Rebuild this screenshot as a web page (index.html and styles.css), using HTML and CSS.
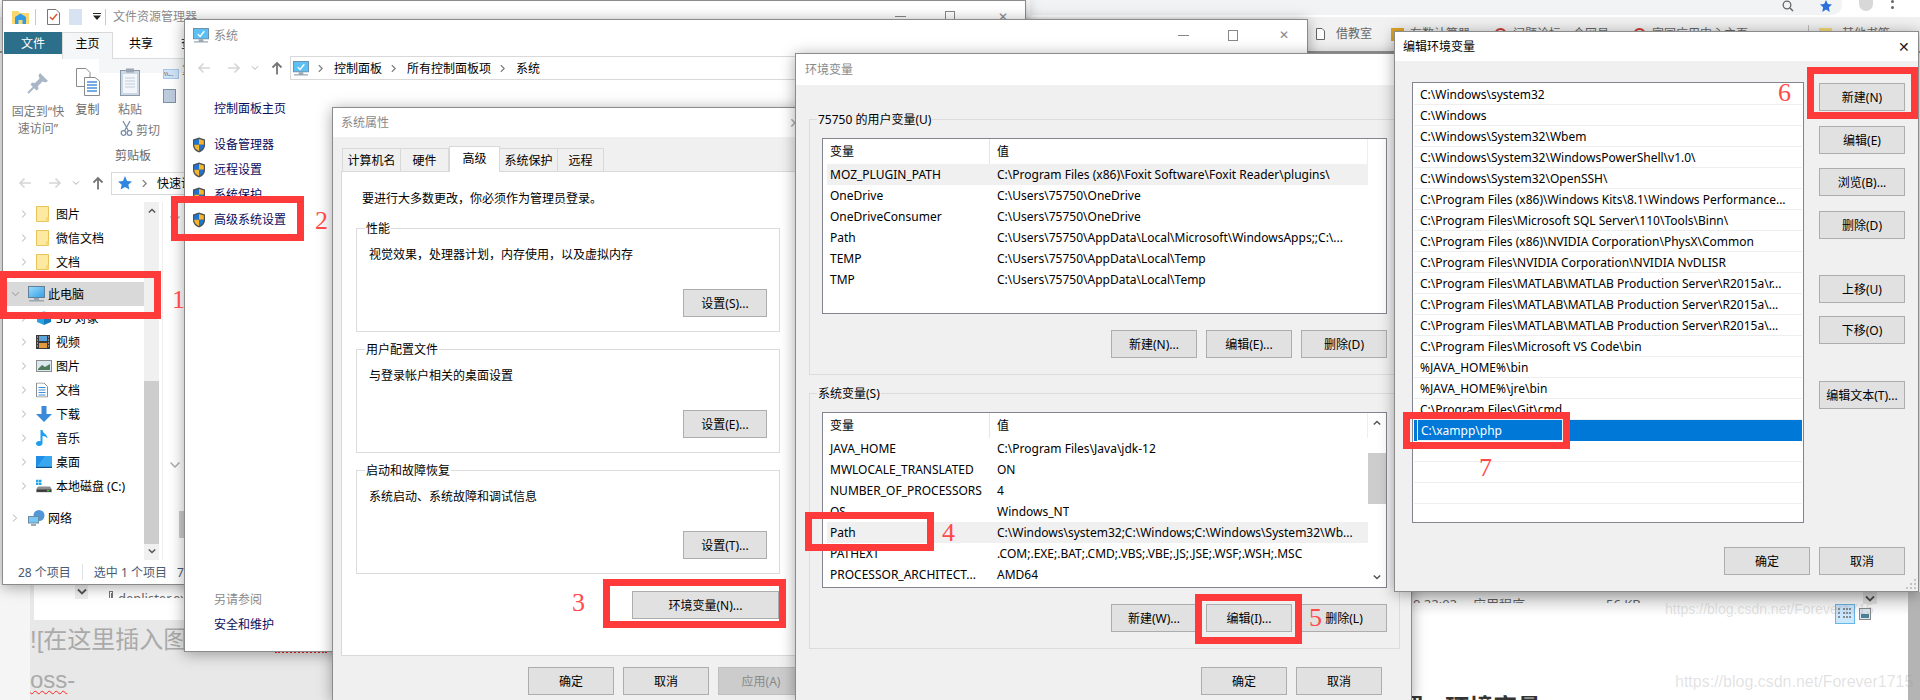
FILE: index.html
```html
<!DOCTYPE html>
<html lang="zh-CN">
<head>
<meta charset="utf-8">
<title>环境变量</title>
<link rel="stylesheet" href="styles.css">
</head>
<body>
<svg class="sprite" width="0" height="0">
  <symbol id="shield" viewBox="0 0 14 16">
    <path d="M7 0.5 13 2.5V8C13 12 10 14.5 7 15.5 4 14.5 1 12 1 8V2.5Z" fill="#4b5157"/>
    <path d="M7 2 2.2 3.4V7.8H7Z" fill="#1e74d2"/>
    <path d="M7 2 11.8 3.4V7.8H7Z" fill="#f7b52a"/>
    <path d="M2.2 7.8H7V14C4.4 13 2.3 11 2.2 7.8Z" fill="#f7b52a"/>
    <path d="M11.8 7.8H7V14C9.6 13 11.7 11 11.8 7.8Z" fill="#1e74d2"/>
  </symbol>
  <symbol id="monitor" viewBox="0 0 17 16">
    <rect x="0.5" y="0.5" width="16" height="11" fill="#5cc0f5" stroke="#6a8ea8"/>
    <path d="M5 6.5 7.5 9 12 3.5" fill="none" stroke="#fff" stroke-width="1.4"/>
    <path d="M6 12H11V14H6ZM1 14H16V15.5H1Z" fill="#9aa7b2"/>
  </symbol>
  <symbol id="monitor-plain" viewBox="0 0 17 16">
    <linearGradient id="screen" x1="0" y1="0" x2="1" y2="1"><stop offset="0" stop-color="#9fdcfb"/><stop offset="1" stop-color="#2f9fe6"/></linearGradient>
    <rect x="0.5" y="0.5" width="16" height="11" fill="url(#screen)" stroke="#5f7f99"/>
    <path d="M6 12H11V14H6ZM1 14H16V15.5H1Z" fill="#9aa7b2"/>
  </symbol>
  <symbol id="folder" viewBox="0 0 13 16">
    <path d="M0.5 0.5H12.5V15.5H0.5Z" fill="#fde9a0" stroke="#e8c35a"/>
    <path d="M10 11H12.5V15.5H10Z" fill="#f6d877"/>
  </symbol>
  <symbol id="chev-r" viewBox="0 0 8 12"><path d="M1.5 1.5 6 6 1.5 10.5" fill="none" stroke="#c4c4c4" stroke-width="1.4"/></symbol>
  <symbol id="chev-d" viewBox="0 0 12 8"><path d="M1.5 1.5 6 6 10.5 1.5" fill="none" stroke="#a8a8a8" stroke-width="1.4"/></symbol>
  <symbol id="arr-u" viewBox="0 0 10 7"><path d="M1 5.5 5 1.5 9 5.5" fill="none" stroke="#555" stroke-width="1.8"/></symbol>
  <symbol id="arr-d" viewBox="0 0 10 7"><path d="M1 1.5 5 5.5 9 1.5" fill="none" stroke="#555" stroke-width="1.8"/></symbol>
  <symbol id="back" viewBox="0 0 14 12"><path d="M13 6H2M6.5 1.5 2 6 6.5 10.5" fill="none" stroke="#d5d5d5" stroke-width="1.6"/></symbol>
  <symbol id="fwd" viewBox="0 0 14 12"><path d="M1 6H12M7.5 1.5 12 6 7.5 10.5" fill="none" stroke="#d5d5d5" stroke-width="1.6"/></symbol>
  <symbol id="up" viewBox="0 0 12 14"><path d="M6 13.5V2M1.5 6.5 6 2 10.5 6.5" fill="none" stroke="#757575" stroke-width="1.8"/></symbol>
  <symbol id="crumb" viewBox="0 0 6 10"><path d="M1 1 5 5 1 9" fill="none" stroke="#7a7a7a" stroke-width="1.5"/></symbol>
</svg>

<div class="browser-bar">
  <div class="omnibox">
    <svg class="omni-lens" width="12" height="12" viewBox="0 0 12 12"><circle cx="5" cy="5" r="3.8" fill="none" stroke="#666" stroke-width="1.3"/><path d="M8 8 11 11" stroke="#666" stroke-width="1.5"/></svg>
    <svg class="omni-star" width="12" height="12" viewBox="0 0 12 12"><path d="M6 0 7.8 4 12 4.5 8.9 7.3 9.7 12 6 9.6 2.3 12 3.1 7.3 0 4.5 4.2 4Z" fill="#2a6fdb"/></svg>
  </div>
  <div class="avatar"></div>
  <div class="menu-dots"><i></i><i></i></div>
</div>
<div class="bookmarks">
  <svg class="bm-doc" width="9" height="12" viewBox="0 0 9 12"><path d="M0.5 0.5H6L8.5 3V11.5H0.5Z" fill="#fff" stroke="#666"/></svg>
  <span class="bm-a">借教室</span>
  <i class="bm-ic bm-yellow"></i><span class="bm-b">有数计算器</span>
  <i class="bm-ic bm-red"></i><span class="bm-c">问题论坛一个网易</span>
  <i class="bm-ic bm-red"></i><span class="bm-d">家园应用中心主页</span>
  <i class="bm-sep"></i>
  <i class="bm-ic bm-folder"></i><span class="bm-e">其他书签</span>
</div>

<div class="editor-bg">
  <div class="behind-panel">
    <span class="behind-arrow"><svg width="10" height="7"><use href="#arr-d"/></svg></span>
    <span class="behind-file"><i class="file-ic"></i>deplister.exe</span>
  </div>
  <p class="md-line">![在这里插入图</p>
  <p class="md-line md-oss"><span class="wavy">oss</span>-</p>
  <i class="red-dots"></i>
</div>

<div class="right-bg">
  <div class="behind-row"><span class="c-date">0 22:02</span><span class="c-type">应用程序</span><span class="c-size">56 KB</span></div>
  <span class="behind-arrow2"><svg width="10" height="7"><use href="#arr-d"/></svg></span>
  <div class="view-icons">
    <span class="view-a"><svg width="16" height="14" viewBox="0 0 16 14"><path d="M1 2H4M6 2H15M1 6H4M6 6H15M1 10H4M6 10H15" stroke="#6d6d6d" stroke-width="1.4" stroke-dasharray="2 1"/></svg></span>
    <span class="view-b"></span>
  </div>
  <h2 class="bg-heading">置 › 环境变量 ›</h2>
</div>
<span class="wm wm-a">https://blog.csdn.net/Forever1715</span>
<span class="wm wm-b">https://blog.csdn.net/Forever1715</span>

<!-- File Explorer -->
<section class="win explorer">
  <header class="ex-title">
    <svg class="ex-home" width="17" height="14" viewBox="0 0 17 14"><path d="M0 1H6L8 3H17V14H0Z" fill="#f9d76e"/><path d="M3 14V7L8.5 3.5 14 7V14H10.5V10H6.5V14Z" fill="#2f9be6"/></svg>
    <i class="ex-divider"></i>
    <svg class="ex-check" width="13" height="16" viewBox="0 0 13 16"><path d="M0.5 0.5H9L12.5 4V15.5H0.5Z" fill="#fff" stroke="#777"/><path d="M3 8 5.5 10.5 10 5" fill="none" stroke="#d9512c" stroke-width="1.4"/></svg>
    <i class="ex-doc"></i>
    <svg class="ex-drop" width="8" height="7" viewBox="0 0 8 7"><path d="M0 0H8V1H0ZM0 2.5H8L4 7Z" fill="#222"/></svg>
    <i class="ex-divider ex-divider-b"></i>
    <span class="ex-title-text">文件资源管理器</span>
    <span class="caption ex-caption"><span class="cap-min"></span><span class="cap-max"></span><span class="cap-x">✕</span></span>
  </header>
  <nav class="ex-tabs">
    <span class="ex-tab ex-file">文件</span>
    <span class="ex-tab ex-home-tab">主页</span>
    <span class="ex-tab ex-share">共享</span>
    <span class="ex-tab ex-view">查看</span>
  </nav>
  <div class="ribbon">
    <div class="rb-col rb-pin">
      <svg width="22" height="22" viewBox="0 0 22 22"><path d="M13 1 21 9 18.5 10.5 15.5 9.5 11 14 11.5 17 9.5 18.5 3.5 12.5 5 10.5 8 11 12.5 6.5 11.5 3.5Z" fill="#a9b6c6"/><path d="M7 15 1 21" stroke="#a9b6c6" stroke-width="2"/></svg>
      <span class="rb-text">固定到“快</span>
      <span class="rb-text">速访问”</span>
    </div>
    <div class="rb-col rb-copy">
      <svg width="24" height="28" viewBox="0 0 24 28"><path d="M0.5 0.5H10L14 4.5V18.5H0.5Z" fill="#fff" stroke="#8a8a8a"/><path d="M8.5 9.5H19L23.5 13V27.5H8.5Z" fill="#fff" stroke="#8a8a8a"/><path d="M11 14H21M11 17H21M11 20H21M11 23H21" stroke="#4a90d9" stroke-width="1.4"/></svg>
      <span class="rb-text rb-dark">复制</span>
    </div>
    <div class="rb-col rb-paste">
      <svg width="20" height="28" viewBox="0 0 20 28"><rect x="0.5" y="2.5" width="19" height="25" fill="#cdd7e4" stroke="#8b98a8"/><rect x="3" y="6" width="14" height="19" fill="#f3f6fa"/><rect x="6" y="0.5" width="8" height="4" fill="#9aa6b5"/><path d="M5 10H15M5 13H15M5 16H15M5 19H15" stroke="#c2ccd9"/></svg>
      <span class="rb-text">粘贴</span>
      <span class="rb-cut">
        <svg width="13" height="16" viewBox="0 0 13 16"><path d="M3 1 8.5 11M10 1 4.5 11" stroke="#7b8ea8" stroke-width="1.3"/><circle cx="3.5" cy="13" r="2.3" fill="none" stroke="#7b8ea8" stroke-width="1.3"/><circle cx="9.5" cy="13" r="2.3" fill="none" stroke="#7b8ea8" stroke-width="1.3"/></svg>
        剪切
      </span>
      <span class="rb-text rb-group">剪贴板</span>
    </div>
    <div class="rb-col rb-small">
      <i class="rb-s1">\\...</i>
      <i class="rb-s2"></i>
      <span class="rb-cut-text">复</span>
    </div>
  </div>
  <div class="ex-nav">
    <svg class="n-back" width="14" height="12"><use href="#back"/></svg>
    <svg class="n-fwd" width="14" height="12"><use href="#fwd"/></svg>
    <svg class="n-drop" width="8" height="6"><use href="#chev-d"/></svg>
    <svg class="n-up" width="12" height="14"><use href="#up"/></svg>
    <div class="ex-address">
      <svg width="14" height="14" viewBox="0 0 14 14"><path d="M7 0 9 5 14 5.4 10.3 8.7 11.4 13.6 7 11 2.6 13.6 3.7 8.7 0 5.4 5 5Z" fill="#2f86de"/></svg>
      <svg class="crumb-ic" width="5" height="9"><use href="#crumb"/></svg>
      <span>快速访问</span>
    </div>
  </div>
  <div class="ex-body">
    <ul class="tree">
      <li class="t-row"><svg class="t-chev" width="6" height="10"><use href="#chev-r"/></svg><svg class="t-ic" width="13" height="16"><use href="#folder"/></svg>图片</li>
      <li class="t-row"><svg class="t-chev" width="6" height="10"><use href="#chev-r"/></svg><svg class="t-ic" width="13" height="16"><use href="#folder"/></svg>微信文档</li>
      <li class="t-row"><svg class="t-chev" width="6" height="10"><use href="#chev-r"/></svg><svg class="t-ic" width="13" height="16"><use href="#folder"/></svg>文档</li>
      <li class="t-row t-root t-selected"><svg class="t-chev-d" width="9" height="6"><use href="#chev-d"/></svg><svg class="t-root-ic" width="17" height="16"><use href="#monitor-plain"/></svg>此电脑</li>
      <li class="t-row"><svg class="t-chev" width="6" height="10"><use href="#chev-r"/></svg><svg class="t-ic" width="16" height="16" viewBox="0 0 16 16"><path d="M8 1 15 4 8 7 1 4Z" fill="#8fd3f5"/><path d="M1 4 8 7V15L1 12Z" fill="#2aa2e0"/><path d="M15 4 8 7V15L15 12Z" fill="#137bbf"/></svg>3D 对象</li>
      <li class="t-row"><svg class="t-chev" width="6" height="10"><use href="#chev-r"/></svg><svg class="t-ic" width="14" height="14" viewBox="0 0 14 14"><rect width="14" height="14" fill="#3a3a3a"/><rect x="3" y="1" width="8" height="5" fill="#5ba3dc"/><rect x="3" y="8" width="8" height="5" fill="#e39a3b"/><path d="M1 2H2M1 5H2M1 8H2M1 11H2M12 2H13M12 5H13M12 8H13M12 11H13" stroke="#ddd"/></svg>视频</li>
      <li class="t-row"><svg class="t-chev" width="6" height="10"><use href="#chev-r"/></svg><svg class="t-ic" width="16" height="12" viewBox="0 0 16 12"><rect x="0.5" y="0.5" width="15" height="11" fill="#dce8f0" stroke="#8d8d8d"/><path d="M2 9 6 5 9 7 14 4V10H2Z" fill="#4f7a5c"/></svg>图片</li>
      <li class="t-row"><svg class="t-chev" width="6" height="10"><use href="#chev-r"/></svg><svg class="t-ic" width="12" height="15" viewBox="0 0 12 15"><path d="M0.5 0.5H8L11.5 4V14.5H0.5Z" fill="#fff" stroke="#8d8d8d"/><path d="M2.5 5H9.5M2.5 7.5H9.5M2.5 10H9.5M2.5 12.5H9.5" stroke="#3f8fd6"/></svg>文档</li>
      <li class="t-row"><svg class="t-chev" width="6" height="10"><use href="#chev-r"/></svg><svg class="t-ic" width="16" height="16" viewBox="0 0 16 16"><path d="M5.5 0H10.5V8H16L8 16 0 8H5.5Z" fill="#3a8ad9"/></svg>下载</li>
      <li class="t-row"><svg class="t-chev" width="6" height="10"><use href="#chev-r"/></svg><svg class="t-ic" width="12" height="16" viewBox="0 0 12 16"><path d="M4.5 0H6.5C7 4 11.5 4 11.5 8.5 10 6.5 8 6 6.5 6V13C6.5 15 5 16 3 16S0 15 0 13.5 1.5 11 3 11C3.6 11 4 11.1 4.5 11.3Z" fill="#1c9ff0"/></svg>音乐</li>
      <li class="t-row"><svg class="t-chev" width="6" height="10"><use href="#chev-r"/></svg><svg class="t-ic" width="16" height="12" viewBox="0 0 16 12"><rect width="16" height="12" fill="#1f8ee6"/><path d="M0 12 9 0H16V12Z" fill="#39a7f0"/><path d="M0 10.8H16V12H0Z" fill="#0e4e84"/></svg>桌面</li>
      <li class="t-row"><svg class="t-chev" width="6" height="10"><use href="#chev-r"/></svg><svg class="t-ic" width="16" height="13" viewBox="0 0 16 13"><path d="M0 0H2.5V2.5H0ZM3 0H5.5V2.5H3ZM0 3H2.5V5.5H0ZM3 3H5.5V5.5H3Z" fill="#1ea7e8"/><path d="M2 7H14L16 10V13H0V10Z" fill="#8e8e8e"/><rect x="1" y="10" width="14" height="2.4" fill="#3a3a3a"/><rect x="11" y="10.6" width="2.4" height="1.2" fill="#3fd64a"/></svg>本地磁盘 (C:)</li>
      <li class="t-row t-root t-net"><svg class="t-chev t-chev-root" width="6" height="10"><use href="#chev-r"/></svg><svg class="t-root-ic" width="17" height="16" viewBox="0 0 17 16"><circle cx="11" cy="5.5" r="5.5" fill="#4f97d6"/><rect x="0.5" y="6.5" width="10" height="6.5" fill="#78c8f3" stroke="#6c8ca5"/><path d="M3 15H8" stroke="#7f8f9c" stroke-width="1.5"/></svg>网络</li>
    </ul>
    <div class="sb">
      <span class="sb-btn"><svg width="8" height="6"><use href="#arr-u"/></svg></span>
      <span class="sb-track"><i class="sb-thumb"></i></span>
      <span class="sb-btn"><svg width="8" height="6"><use href="#arr-d"/></svg></span>
    </div>
    <div class="ex-list">
      <svg class="list-chev list-chev-a" width="12" height="8"><use href="#chev-d"/></svg>
      <svg class="list-chev list-chev-b" width="12" height="8"><use href="#chev-d"/></svg>
      <i class="list-btn"></i>
    </div>
  </div>
  <footer class="ex-status"><span>28 个项目</span><i></i><span>选中 1 个项目</span><span class="st-size">73.5 KB</span></footer>
</section>

<!-- System -->
<section class="win system">
  <header class="sys-title">
    <svg width="16" height="15"><use href="#monitor"/></svg>
    <span class="t-muted">系统</span>
    <span class="caption sys-caption"><span class="cap-min"></span><span class="cap-max"></span><span class="cap-x">✕</span></span>
  </header>
  <div class="sys-nav">
    <svg class="n-back" width="14" height="12"><use href="#back"/></svg>
    <svg class="n-fwd" width="14" height="12"><use href="#fwd"/></svg>
    <svg class="n-drop" width="8" height="6"><use href="#chev-d"/></svg>
    <svg class="n-up" width="12" height="14"><use href="#up"/></svg>
    <div class="sys-address">
      <svg width="16" height="15"><use href="#monitor"/></svg>
      <svg class="crumb-ic" width="5" height="9"><use href="#crumb"/></svg><span>控制面板</span>
      <svg class="crumb-ic" width="5" height="9"><use href="#crumb"/></svg><span>所有控制面板项</span>
      <svg class="crumb-ic" width="5" height="9"><use href="#crumb"/></svg><span>系统</span>
    </div>
  </div>
  <div class="sys-side">
    <a class="side-home">控制面板主页</a>
    <a class="side-item"><svg width="14" height="16"><use href="#shield"/></svg>设备管理器</a>
    <a class="side-item"><svg width="14" height="16"><use href="#shield"/></svg>远程设置</a>
    <a class="side-item"><svg width="14" height="16"><use href="#shield"/></svg>系统保护</a>
    <a class="side-item"><svg width="14" height="16"><use href="#shield"/></svg>高级系统设置</a>
    <div class="side-foot">
      <span class="side-see">另请参阅</span>
      <a class="side-link">安全和维护</a>
    </div>
  </div>
</section>

<!-- System Properties -->
<section class="win props">
  <header class="dlg-title props-title"><span class="t-muted">系统属性</span><span class="dlg-x dim">✕</span></header>
  <div class="props-body">
    <div class="tabs">
      <span class="tab tab-1">计算机名</span>
      <span class="tab tab-2">硬件</span>
      <span class="tab tab-3 active">高级</span>
      <span class="tab tab-4">系统保护</span>
      <span class="tab tab-5">远程</span>
    </div>
    <div class="tab-panel">
      <p class="intro">要进行大多数更改，你必须作为管理员登录。</p>
      <div class="grp">
        <span class="legend">性能</span>
        <p class="grp-desc">视觉效果，处理器计划，内存使用，以及虚拟内存</p>
        <div class="grp-foot"><span class="btn btn-set">设置(S)...</span></div>
      </div>
      <div class="grp">
        <span class="legend">用户配置文件</span>
        <p class="grp-desc">与登录帐户相关的桌面设置</p>
        <div class="grp-foot"><span class="btn btn-set">设置(E)...</span></div>
      </div>
      <div class="grp">
        <span class="legend">启动和故障恢复</span>
        <p class="grp-desc">系统启动、系统故障和调试信息</p>
        <div class="grp-foot"><span class="btn btn-set">设置(T)...</span></div>
      </div>
      <div class="env-row"><span class="btn btn-env">环境变量(N)...</span></div>
    </div>
    <div class="dlg-actions props-actions">
      <span class="btn btn-w86">确定</span>
      <span class="btn btn-w86">取消</span>
      <span class="btn btn-w86 disabled">应用(A)</span>
    </div>
  </div>
</section>

<!-- Environment Variables -->
<section class="win env">
  <header class="dlg-title env-title"><span class="t-muted">环境变量</span></header>
  <div class="env-body">
    <div class="env-grp env-grp-a">
      <span class="legend legend-env">75750 的用户变量(U)</span>
      <div class="vlist">
        <div class="vlist-main">
          <div class="v-head"><span class="v-name">变量</span><span class="v-val">值</span></div>
          <div class="v-row hover"><span class="v-name">MOZ_PLUGIN_PATH</span><span class="v-val">C:\Program Files (x86)\Foxit Software\Foxit Reader\plugins\</span></div>
          <div class="v-row"><span class="v-name">OneDrive</span><span class="v-val">C:\Users\75750\OneDrive</span></div>
          <div class="v-row"><span class="v-name">OneDriveConsumer</span><span class="v-val">C:\Users\75750\OneDrive</span></div>
          <div class="v-row"><span class="v-name">Path</span><span class="v-val">C:\Users\75750\AppData\Local\Microsoft\WindowsApps;;C:\...</span></div>
          <div class="v-row"><span class="v-name">TEMP</span><span class="v-val">C:\Users\75750\AppData\Local\Temp</span></div>
          <div class="v-row"><span class="v-name">TMP</span><span class="v-val">C:\Users\75750\AppData\Local\Temp</span></div>
        </div>
      </div>
      <div class="env-btns">
        <span class="btn btn-w86">新建(N)...</span>
        <span class="btn btn-w86">编辑(E)...</span>
        <span class="btn btn-w86">删除(D)</span>
      </div>
    </div>
    <div class="env-grp env-grp-b">
      <span class="legend legend-env">系统变量(S)</span>
      <div class="vlist">
        <div class="vlist-main">
          <div class="v-head"><span class="v-name">变量</span><span class="v-val">值</span></div>
          <div class="v-row"><span class="v-name">JAVA_HOME</span><span class="v-val">C:\Program Files\Java\jdk-12</span></div>
          <div class="v-row"><span class="v-name">MWLOCALE_TRANSLATED</span><span class="v-val">ON</span></div>
          <div class="v-row"><span class="v-name">NUMBER_OF_PROCESSORS</span><span class="v-val">4</span></div>
          <div class="v-row"><span class="v-name">OS</span><span class="v-val">Windows_NT</span></div>
          <div class="v-row hover"><span class="v-name">Path</span><span class="v-val">C:\Windows\system32;C:\Windows;C:\Windows\System32\Wb...</span></div>
          <div class="v-row"><span class="v-name">PATHEXT</span><span class="v-val">.COM;.EXE;.BAT;.CMD;.VBS;.VBE;.JS;.JSE;.WSF;.WSH;.MSC</span></div>
          <div class="v-row"><span class="v-name">PROCESSOR_ARCHITECT...</span><span class="v-val">AMD64</span></div>
        </div>
        <div class="vlist-sb">
          <svg width="8" height="6"><use href="#arr-u"/></svg>
          <i class="vlist-thumb"></i>
          <svg class="vlist-down" width="8" height="6"><use href="#arr-d"/></svg>
        </div>
      </div>
      <div class="env-btns">
        <span class="btn btn-w86">新建(W)...</span>
        <span class="btn btn-w86">编辑(I)...</span>
        <span class="btn btn-w86">删除(L)</span>
      </div>
    </div>
    <div class="dlg-actions env-actions">
      <span class="btn btn-w86">确定</span>
      <span class="btn btn-w86">取消</span>
    </div>
  </div>
</section>

<!-- Edit Environment Variable -->
<section class="win edit">
  <header class="dlg-title edit-title"><span>编辑环境变量</span><span class="dlg-x">✕</span></header>
  <div class="edit-body">
    <div class="edit-main">
      <div class="plist">
        <div class="p-row">C:\Windows\system32</div>
        <div class="p-row">C:\Windows</div>
        <div class="p-row">C:\Windows\System32\Wbem</div>
        <div class="p-row">C:\Windows\System32\WindowsPowerShell\v1.0\</div>
        <div class="p-row">C:\Windows\System32\OpenSSH\</div>
        <div class="p-row">C:\Program Files (x86)\Windows Kits\8.1\Windows Performance...</div>
        <div class="p-row">C:\Program Files\Microsoft SQL Server\110\Tools\Binn\</div>
        <div class="p-row">C:\Program Files (x86)\NVIDIA Corporation\PhysX\Common</div>
        <div class="p-row">C:\Program Files\NVIDIA Corporation\NVIDIA NvDLISR</div>
        <div class="p-row">C:\Program Files\MATLAB\MATLAB Production Server\R2015a\r...</div>
        <div class="p-row">C:\Program Files\MATLAB\MATLAB Production Server\R2015a\...</div>
        <div class="p-row">C:\Program Files\MATLAB\MATLAB Production Server\R2015a\...</div>
        <div class="p-row">C:\Program Files\Microsoft VS Code\bin</div>
        <div class="p-row">%JAVA_HOME%\bin</div>
        <div class="p-row">%JAVA_HOME%\jre\bin</div>
        <div class="p-row">C:\Program Files\Git\cmd</div>
        <div class="p-row p-sel"><span class="p-input">C:\xampp\php</span></div>
        <div class="p-row"></div>
        <div class="p-row"></div>
        <div class="p-row"></div>
      </div>
      <div class="edit-side">
        <span class="btn btn-side">新建(N)</span>
        <span class="btn btn-side">编辑(E)</span>
        <span class="btn btn-side">浏览(B)...</span>
        <span class="btn btn-side">删除(D)</span>
        <span class="btn btn-side">上移(U)</span>
        <span class="btn btn-side">下移(O)</span>
        <span class="btn btn-side">编辑文本(T)...</span>
      </div>
    </div>
    <div class="dlg-actions edit-actions">
      <span class="btn btn-side">确定</span>
      <span class="btn btn-side">取消</span>
    </div>
    <svg class="grip" width="11" height="11" viewBox="0 0 11 11"><path d="M8 0H10V2H8ZM4 4H6V6H4ZM8 4H10V6H8ZM0 8H2V10H0ZM4 8H6V10H4ZM8 8H10V10H8Z" fill="#c4c4c4"/></svg>
  </div>
</section>

<!-- Annotations -->
<i class="mark mark-1"></i><span class="num num-1">1</span>
<i class="mark mark-2"></i><span class="num num-2">2</span>
<i class="mark mark-3"></i><span class="num num-3">3</span>
<i class="mark mark-4"></i><span class="num num-4">4</span>
<i class="mark mark-5"></i><span class="num num-5">5</span>
<i class="mark mark-6"></i><span class="num num-6">6</span>
<i class="mark mark-7"></i><span class="num num-7">7</span>
</body>
</html>
```

FILE: styles.css
```css
* { box-sizing: border-box; }
html, body { margin: 0; padding: 0; }
html { height: 700px; overflow: hidden; }
body {
  position: relative;
  width: 1920px;
  height: 700px;
  overflow: hidden;
  background: #f5f5f5;
  font: 12px/17px "Noto Sans", "Noto Sans CJK SC", sans-serif;
  color: #000;
}
p, ul, h2 { margin: 0; padding: 0; }
ul { list-style: none; }
i { font-style: normal; display: block; }
svg { display: block; flex: none; }
.sprite { position: absolute; }

/* Browser behind the windows */
.browser-bar { height: 17px; background: #fff; display: flex; align-items: flex-start; position: relative; }
.omnibox { margin-left: 1030px; width: 812px; height: 15px; background: #f1f3f4; border-radius: 0 0 10px 0; position: relative; }
.omni-lens { position: absolute; right: 48px; top: 0; }
.omni-star { position: absolute; right: 10px; top: 0; }
.avatar { margin-left: 17px; width: 14px; height: 11px; border-radius: 0 0 7px 7px; background: #d8d8d8; }
.menu-dots { margin-left: 18px; display: flex; flex-direction: column; gap: 3px; padding-top: 0; }
.menu-dots i { width: 3px; height: 3px; border-radius: 2px; background: #666; }
.bookmarks { height: 36px; background: #f1f1f1; border-bottom: 2px solid #9a9a9a; position: relative; color: #666; display: flex; align-items: center; padding-left: 1316px; line-height: 16px; }
.bm-doc { margin-right: 11px; }
.bm-ic { width: 13px; height: 13px; flex: none; }
.bm-yellow { background: #e0a526; margin-left: 19px; }
.bm-red { border: 2px solid #cc3a32; border-radius: 50%; margin-left: 24px; }
.bm-folder { background: #f3d775; margin-left: 10px; }
.bm-sep { width: 1px; height: 18px; background: #bbb; margin-left: 60px; }
.bm-b, .bm-c, .bm-d, .bm-e { margin-left: 6px; }
.bm-e { margin-left: 10px; }

.editor-bg { position: absolute; left: 30px; top: 584px; width: 310px; height: 116px; background: #e8e8e8; }
.behind-panel { margin-left: 4px; width: 160px; height: 36px; background: #fff; display: flex; align-items: flex-start; overflow: hidden; }
.behind-arrow { width: 15px; height: 15px; margin-left: 41px; background: #eee; display: flex; align-items: center; justify-content: center; }
.behind-file { margin: 7px 0 0 21px; height: 7px; overflow: hidden; color: #666; font-size: 13px; line-height: 14px; display: flex; align-items: flex-start; gap: 5px; white-space: nowrap; }
.file-ic { width: 14px; height: 12px; border: 1px solid #777; background: linear-gradient(#3f7fd0, #3f7fd0) 1px 1px/5px 5px no-repeat #fff; }
.md-line { font-family: "Liberation Sans", "Noto Sans CJK SC", sans-serif; font-size: 24px; line-height: 40px; color: #aaa; white-space: nowrap; overflow: hidden; height: 40px; }
.md-oss { height: 38px; }
.wavy { text-decoration: underline wavy #f22; text-decoration-thickness: 1px; text-underline-offset: 2px; }
.red-dots { position: absolute; left: 245px; top: 67px; width: 52px; border-top: 2px dotted #e22; }

.right-bg { position: absolute; left: 1412px; top: 592px; width: 508px; height: 108px; background: #fff; border-right: 12px solid #b4b4b4; overflow: hidden; }
.right-bg::before { content: ""; position: absolute; inset: 0 0 auto 0; height: 24px; background: linear-gradient(rgba(0,0,0,.16), rgba(0,0,0,0)); z-index: 2; }
.behind-row { display: flex; height: 5px; margin-top: 6px; overflow: hidden; color: #666; font-size: 13px; line-height: 13px; }
.c-date { width: 60px; margin-left: 1px; }
.c-type { width: 133px; }
.behind-arrow2 { position: absolute; left: 451px; top: 0; width: 14px; height: 12px; background: #e8e8e8; display: flex; align-items: center; justify-content: center; }
.view-icons { position: absolute; left: 423px; top: 12px; display: flex; gap: 4px; align-items: center; }
.view-a { width: 20px; height: 20px; background: #cce8ff; border: 1px solid #66b7e8; display: flex; align-items: center; justify-content: center; }
.view-b { width: 12px; height: 12px; border: 1px solid #888; background: linear-gradient(#4d7f96, #4d7f96) 1px 5px/8px 4px no-repeat #dde8f2; }
.bg-heading { position: absolute; left: -12px; top: 100px; font-size: 24px; line-height: 30px; font-weight: 700; color: #333; white-space: nowrap; }
.wm { position: absolute; z-index: 20; font-family: "Liberation Sans", sans-serif; color: rgba(150,150,150,.28); white-space: nowrap; }
.wm-a { left: 1665px; top: 598px; font-size: 14px; line-height: 22px; }
.wm-b { left: 1675px; top: 671px; font-size: 16px; line-height: 22px; }

/* Windows */
.win { position: absolute; background: #fff; border: 1px solid #8b8b8b; box-shadow: 0 2px 14px rgba(0,0,0,.35); }
.t-muted { color: #8a8a8a; }
.caption { margin-left: auto; display: flex; align-items: center; color: #888; }
.cap-min { width: 11px; height: 1px; background: #888; }
.cap-max { width: 10px; height: 11px; border: 1px solid #888; }
.cap-x { font-size: 12px; line-height: 12px; }

.explorer { left: 2px; top: 0; width: 1024px; height: 585px; }
.ex-title { height: 31px; display: flex; align-items: center; padding: 0 17px 0 9px; }
.ex-divider { width: 1px; height: 16px; background: #c8c8c8; margin-left: 6px; }
.ex-check { margin-left: 11px; }
.ex-doc { width: 13px; height: 16px; background: #d7e3f3; margin-left: 9px; }
.ex-drop { margin-left: 11px; }
.ex-divider-b { margin-left: 4px; }
.ex-title-text { color: #8a8a8a; margin-left: 7px; }
.ex-caption { gap: 0; }
.ex-caption .cap-max { margin: 0 43px 0 39px; }
.ex-tabs { height: 27px; display: flex; align-items: flex-start; position: relative; }
.ex-tab { height: 22px; display: flex; align-items: center; justify-content: center; }
.ex-file { width: 58px; margin-left: 1px; background: #2b6f8a; color: #fff; }
.ex-home-tab { width: 51px; height: 27px; padding-bottom: 5px; background: #f5f6f7; border: 1px solid #d9d9d9; border-bottom: 0; }
.ex-share { width: 56px; }
.ex-view { width: 30px; margin-left: 12px; justify-content: flex-start; }
.ex-tabs::after { content: ""; position: absolute; left: 110px; right: 0; bottom: 0; border-bottom: 1px solid #dadbdc; }
.ribbon { height: 106px; display: flex; background: linear-gradient(#f5f6f7, #f5f6f7) 96px 0/90px 14px no-repeat #fff; }
.rb-col { display: flex; flex-direction: column; align-items: center; color: #777; }
.rb-text { line-height: 17px; white-space: nowrap; }
.rb-dark { color: #666; margin-top: 5px; }
.rb-pin { margin-left: 8px; width: 54px; padding-top: 13px; }
.rb-pin svg { margin-bottom: 9px; }
.rb-copy { margin-left: 10px; width: 25px; padding-top: 9px; }
.rb-paste { margin-left: 15px; width: 40px; padding-top: 9px; align-items: flex-start; }
.rb-paste svg:first-child { margin-left: 5px; margin-bottom: 5px; }
.rb-paste > .rb-text:nth-of-type(1) { margin-left: 3px; }
.rb-cut { display: flex; align-items: center; gap: 3px; white-space: nowrap; height: 20px; margin-top: 2px; margin-bottom: 7px; }
.rb-group { color: #666; }
.rb-small { margin-left: 8px; padding-top: 10px; align-items: flex-start; position: relative; }
.rb-s1 { width: 16px; height: 10px; background: #cfe2f7; border: 1px solid #a9c6e8; font-size: 6px; line-height: 8px; color: #333; overflow: hidden; margin-bottom: 10px; }
.rb-s2 { width: 13px; height: 14px; background: #bccbdd; border: 1px solid #7f8fa3; }
.rb-cut-text { position: absolute; left: 19px; top: 2px; }
.ex-nav { height: 37px; display: flex; align-items: center; padding-left: 15px; padding-bottom: 1px; }
.n-fwd { margin-left: 16px; }
.n-drop { margin-left: 10px; }
.n-up { margin-left: 12px; }
.ex-address { margin-left: 7px; flex: 1; height: 23px; margin-right: 10px; border: 1px solid #d9d9d9; display: flex; align-items: center; padding-left: 6px; }
.crumb-ic { margin: 0 10px; }
.ex-body { height: 358px; display: flex; position: relative; }
.tree { width: 141px; margin-left: 0; }
.t-row { height: 24px; display: flex; align-items: center; padding-left: 53px; position: relative; white-space: nowrap; }
.t-ic { position: absolute; left: 33px; top: 50%; transform: translateY(-50%); }
.t-chev { position: absolute; left: 18px; top: 7px; }
.t-root { margin-top: 8px; padding-left: 45px; }
.t-selected { background: #d9d9d9; margin-left: 2px; padding-left: 43px; }
.t-chev-d { position: absolute; left: 6px; top: 9px; }
.t-root-ic { position: absolute; left: 25px; top: 4px; }
.t-selected .t-root-ic { left: 23px; }
.t-chev-root { left: 9px; }
.sb { width: 15px; display: flex; flex-direction: column; background: #f0f0f0; }
.sb-btn { height: 18px; display: flex; align-items: center; justify-content: center; flex: none; }
.sb-track { flex: 1; display: flex; flex-direction: column; justify-content: flex-end; }
.sb-thumb { height: 163px; background: #cdcdcd; margin-bottom: -2px; }
.ex-list { flex: 1; position: relative; border-left: 1px solid #f0f0f0; margin-left: 3px; }
.list-chev { position: absolute; left: 6px; }
.list-chev-a { top: 13px; }
.list-chev-b { top: 259px; }
.list-btn { position: absolute; left: 16px; top: 309px; width: 10px; height: 27px; background: #cdcdcd; }
.ex-status { height: 24px; display: flex; align-items: center; padding-left: 15px; color: #4a5a70; }
.ex-status i { width: 1px; height: 16px; background: #e2e2e2; margin: 0 11px; }
.st-size { margin-left: 10px; }

.system { left: 184px; top: 19px; width: 1124px; height: 633px; }
.sys-title { height: 30px; display: flex; align-items: center; gap: 5px; padding: 0 18px 0 8px; }
.sys-caption .cap-max { margin: 0 41px 0 39px; }
.sys-nav { height: 26px; margin-top: 5px; display: flex; align-items: center; padding-left: 12px; }
.sys-address { margin-left: 7px; flex: 1; height: 24px; margin-right: 6px; border: 1px solid #d9d9d9; display: flex; align-items: center; padding-left: 2px; }
.sys-address .crumb-ic { margin: 0 11px 0 9px; }
.sys-side { padding: 15px 0 0 7px; height: 560px; display: flex; flex-direction: column; color: #0b0b5c; }
.side-home { padding-left: 22px; line-height: 25px; margin-bottom: 11px; }
.side-item { display: flex; align-items: center; gap: 8px; height: 25px; }
.side-foot { margin-top: auto; padding-left: 22px; padding-bottom: 8px; display: flex; flex-direction: column; gap: 8px; }
.side-see { color: #8a8a8a; }

/* Dialogs */
.dlg-title { display: flex; align-items: center; justify-content: space-between; background: #fff; flex: none; }
.dlg-x { font-size: 14px; color: #222; line-height: 14px; }
.dlg-x.dim { color: #aaa; }
.btn { display: flex; align-items: center; justify-content: center; height: 28px; flex: none; background: #e1e1e1; border: 1px solid #adadad; white-space: nowrap; }
.btn.disabled { background: #ccc; border-color: #bfbfbf; color: #888; }
.btn-w86 { width: 86px; }
.btn-set { width: 84px; }
.btn-env { width: 147px; }
.btn-side { width: 86px; }

.props { left: 332px; top: 107px; width: 480px; height: 593px; background: #f0f0f0; border-bottom: 0; }
.props-title { height: 29px; padding: 0 10px 0 8px; }
.props-body { padding: 0 8px; }
.tabs { height: 34px; padding: 11px 0 0 1px; display: flex; align-items: flex-end; }
.tab { height: 23px; display: flex; align-items: center; justify-content: center; background: #f0f0f0; border: 1px solid #d9d9d9; border-bottom: 0; border-left: 0; }
.tab:first-child { border-left: 1px solid #d9d9d9; }
.tab-1 { width: 59px; }
.tab-2 { width: 48px; }
.tab-3 { width: 51px; }
.tab-4 { width: 58px; }
.tab-5 { width: 46px; }
.tab.active { height: 26px; background: #fff; border-left: 1px solid #d9d9d9; padding-bottom: 3px; margin-bottom: -1px; position: relative; z-index: 1; }
.tab-panel { width: 460px; height: 485px; background: #fff; border: 1px solid #d9d9d9; padding: 18px 20px 0 14px; }
.intro { margin-left: 6px; line-height: 17px; }
.grp { position: relative; height: 104px; margin-top: 17px; border: 1px solid #dcdcdc; padding: 17px 12px 0 12px; }
.intro + .grp { margin-top: 21px; }
.legend { position: absolute; left: 8px; top: -9px; line-height: 17px; padding: 0 1px; background: #fff; white-space: nowrap; }
.grp-desc { line-height: 17px; }
.grp-foot { display: flex; justify-content: flex-end; margin-top: 26px; }
.env-row { display: flex; justify-content: flex-end; margin-top: 17px; padding-right: 1px; }
.dlg-actions { display: flex; }
.props-actions { margin-top: 11px; margin-left: 187px; gap: 9px; }

.env { left: 795px; top: 53px; width: 617px; height: 647px; background: #f0f0f0; border-bottom: 0; }
.env-title { height: 31px; padding-left: 9px; }
.env-body { padding: 0 11px 0 13px; }
.env-grp { position: relative; height: 256px; border: 1px solid #dcdcdc; padding: 18px 12px 0 12px; margin-top: 34px; }
.env-grp-b { margin-top: 18px; }
.legend-env { background: #f0f0f0; left: 7px; }
.vlist { display: flex; height: 176px; background: #fff; border: 1px solid #82858f; padding-left: 4px; }
.vlist-main { flex: 1; min-width: 0; }
.vlist-sb { width: 18px; flex: none; position: relative; display: flex; flex-direction: column; align-items: center; padding-top: 7px; background: #fff; }
.vlist-thumb { position: absolute; left: 0; top: 40px; width: 18px; height: 51px; background: #cdcdcd; }
.vlist-down { margin-top: auto; margin-bottom: 7px; }
.env-grp-a .vlist { padding-right: 18px; }
.v-head { height: 25px; display: flex; align-items: center; border-right: 1px solid #eee; }
.v-head .v-name { border-right: 1px solid #e6e6e6; height: 25px; line-height: 25px; }
.v-row { height: 21px; display: flex; align-items: center; }
.v-row.hover { background: #f0f0f0; }
.v-name { width: 163px; padding-left: 3px; flex: none; white-space: nowrap; overflow: hidden; }
.v-val { padding-left: 7px; white-space: nowrap; overflow: hidden; }
.env-btns { display: flex; justify-content: flex-end; gap: 9px; margin-top: 16px; }
.env-actions { margin-top: 18px; margin-left: 392px; gap: 9px; }

.edit { left: 1394px; top: 31px; width: 525px; height: 561px; background: #f0f0f0; z-index: 5; }
.edit-title { height: 29px; padding: 0 8px 0 8px; }
.edit-body { position: relative; height: 530px; padding: 21px 13px 0 17px; }
.edit-main { display: flex; gap: 15px; }
.plist { width: 392px; height: 441px; background: #fff; border: 1px solid #82858f; padding: 1px; }
.p-row { height: 21px; padding-left: 6px; line-height: 21px; border-bottom: 1px solid #eee; white-space: nowrap; overflow: hidden; }
.p-sel { background: #0078d7; color: #fff; padding-left: 3px; border-bottom: 0; height: 21px; }
.p-input { display: block; width: 146px; height: 21px; padding-left: 3px; border: 1px solid #e8f2fb; border-width: 0 1px 1px 1px; }
.edit-side { display: flex; flex-direction: column; margin-top: 1px; }
.edit-side .btn:nth-child(2) { margin-top: 15px; }
.edit-side .btn:nth-child(3) { margin-top: 14px; }
.edit-side .btn:nth-child(4) { margin-top: 15px; }
.edit-side .btn:nth-child(5) { margin-top: 36px; }
.edit-side .btn:nth-child(6) { margin-top: 13px; }
.edit-side .btn:nth-child(7) { margin-top: 37px; }
.edit-actions { margin-top: 24px; justify-content: flex-end; gap: 9px; }
.grip { position: absolute; right: 1px; bottom: 1px; }

/* Annotations: free-canvas marks drawn on top of the screenshot */
.mark { position: absolute; z-index: 10; border: 7px solid #ff3a3a; }
.mark-1 { left: 0; top: 271px; width: 161px; height: 48px; }
.mark-2 { left: 171px; top: 196px; width: 133px; height: 45px; }
.mark-3 { left: 603px; top: 579px; width: 183px; height: 49px; }
.mark-4 { left: 805px; top: 512px; width: 129px; height: 39px; }
.mark-5 { left: 1195px; top: 594px; width: 107px; height: 50px; }
.mark-6 { left: 1807px; top: 67px; width: 111px; height: 52px; }
.mark-7 { left: 1403px; top: 412px; width: 167px; height: 37px; }
.num { position: absolute; z-index: 11; font: 26px/30px "Liberation Serif", serif; color: #ff4a4a; }
.num-1 { left: 172px; top: 285px; }
.num-2 { left: 315px; top: 206px; }
.num-3 { left: 572px; top: 588px; }
.num-4 { left: 942px; top: 518px; }
.num-5 { left: 1309px; top: 603px; }
.num-6 { left: 1778px; top: 78px; }
.num-7 { left: 1479px; top: 453px; }
```
